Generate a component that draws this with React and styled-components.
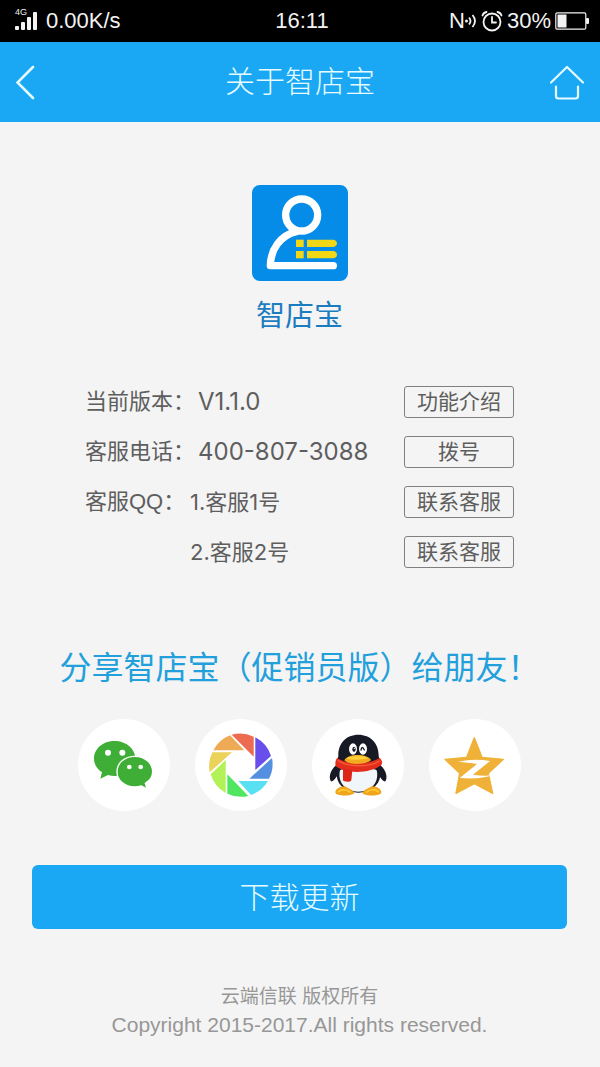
import React from "react";
import styled, { createGlobalStyle } from "styled-components";

const GlobalStyle = createGlobalStyle`
  * {
    box-sizing: border-box;
  }
  body {
    margin: 0;
    background: #f4f4f4;
    font-family: "Liberation Sans", "Noto Sans CJK SC", sans-serif;
  }
  button {
    font-family: inherit;
    cursor: pointer;
  }
`;

const Page = styled.div`
  min-height: 100vh;
  background: #f4f4f4;
`;

const StatusBar = styled.div`
  display: grid;
  grid-template-columns: 1fr auto 1fr;
  align-items: center;
  height: 42px;
  padding: 0 11px 0 15px;
  background: #000;
  color: #f2f2f2;
  font-size: 22px;
  line-height: 42px;
`;

const StatusGroup = styled.div`
  display: flex;
  align-items: center;
  justify-content: ${(props) => (props.$end ? "flex-end" : "flex-start")};
  gap: ${(props) => (props.$end ? "4px" : "9px")};
  white-space: nowrap;
  svg {
    display: block;
    flex: none;
  }
`;

const Signal = styled.span`
  position: relative;
  display: block;
`;

const Network = styled.span`
  position: absolute;
  top: -3px;
  left: 0;
  font-size: 9px;
  line-height: 9px;
`;

const Nfc = styled.span`
  display: flex;
  align-items: center;
`;

const Header = styled.header`
  display: grid;
  grid-template-columns: 1fr auto 1fr;
  align-items: center;
  height: 80px;
  padding: 0 16px;
  background: #1aa8f4;
  color: #e6fbff;
`;

const Title = styled.h1`
  margin: 0;
  font-size: 30px;
  font-weight: 300;
  line-height: 42px;
`;

const IconButton = styled.button`
  display: block;
  justify-self: ${(props) => (props.$end ? "end" : "start")};
  padding: 0;
  border: none;
  background: none;
  color: inherit;
  svg {
    display: block;
  }
`;

const Main = styled.main`
  display: flex;
  flex-direction: column;
  align-items: center;
  padding: 63px 33px 24px 32px;
`;

const AppName = styled.h2`
  margin: 14px 0 48px;
  color: #1c7cc0;
  font-size: 29px;
  font-weight: 400;
  line-height: 43px;
`;

const InfoList = styled.ul`
  display: flex;
  flex-direction: column;
  gap: 18px;
  width: 100%;
  margin: 0;
  padding: 0 53px;
  list-style: none;
`;

const InfoRow = styled.li`
  display: flex;
  align-items: center;
  gap: 3px;
  height: 32px;
  color: #5e5e5e;
  font-size: 22px;
  line-height: 32px;
  white-space: nowrap;
`;

const Label = styled.span`
  min-width: 102px;
`;

const Value = styled.span`
  flex: 1;
  font-family: Inter, "Noto Sans CJK SC", sans-serif;
  font-size: ${(props) => (props.$numeric ? "24px" : "22px")};
`;

const SmallButton = styled.button`
  width: 110px;
  height: 32px;
  padding: 0;
  border: 1px solid #808080;
  border-radius: 3px;
  background: transparent;
  color: #5e5e5e;
  font-size: 21px;
  line-height: 30px;
`;

const ShareTitle = styled.h2`
  margin: 76px 0 27px;
  color: #22a0dc;
  font-size: 32px;
  font-weight: 400;
  line-height: 48px;
  white-space: nowrap;
`;

const ShareList = styled.div`
  display: flex;
  gap: 25px;
`;

const ShareButton = styled.button`
  width: 92px;
  height: 92px;
  padding: 0;
  border: none;
  border-radius: 50%;
  background: #fff;
  svg {
    display: block;
    width: 100%;
    height: 100%;
  }
`;

const UpdateButton = styled.button`
  width: 100%;
  height: 64px;
  margin: 54px 0;
  padding: 2px 0 0;
  border: none;
  border-radius: 6px;
  background: #1aa8f4;
  color: #e6fbff;
  font-size: 30px;
  font-weight: 300;
  line-height: 62px;
`;

const Footer = styled.footer`
  color: #979797;
  font-size: 21px;
  line-height: 28px;
  text-align: center;
  white-space: nowrap;
`;

const Company = styled.div`
  font-size: 19px;
`;

function SignalIcon() {
  return (
    <svg width="22" height="20" viewBox="0 0 22 20" fill="currentColor">
      <rect x="0" y="15" width="4" height="4" rx="1" />
      <rect x="6" y="11" width="4" height="8" rx="1" />
      <rect x="12" y="6" width="4" height="13" rx="1" />
      <rect x="18" y="1" width="4" height="18" rx="1" />
    </svg>
  );
}

function WavesIcon() {
  return (
    <svg width="12" height="16" viewBox="0 0 12 16" fill="none" stroke="currentColor" strokeWidth="1.8">
      <circle cx="1.500" cy="8" r="1.500" fill="currentColor" stroke="none" />
      <path d="M4 4.500q3 3.500 0 7M7.500 2q5 6 0 12" />
    </svg>
  );
}

function AlarmIcon() {
  return (
    <svg width="22" height="22" viewBox="0 0 22 22" fill="none" stroke="currentColor" strokeWidth="1.8" strokeLinecap="round">
      <circle cx="11" cy="12" r="8.500" />
      <path d="M11 7v5.500h4M1.500 5.500Q2.500 2.500 5.500 2M20.500 5.500Q19.500 2.500 16.500 2" />
    </svg>
  );
}

function BatteryIcon() {
  return (
    <svg width="34" height="18" viewBox="0 0 34 18">
      <rect x="0.8" y="0.8" width="30" height="16.4" rx="1.5" fill="none" stroke="currentColor" strokeWidth="1.2" />
      <rect x="2.500" y="2.500" width="9" height="13" fill="currentColor" />
      <rect x="31" y="6" width="3" height="6" rx="1" fill="currentColor" />
    </svg>
  );
}

function BackIcon() {
  return (
    <svg width="20" height="36" viewBox="0 0 20 36" fill="none" stroke="currentColor" strokeWidth="2.6" strokeLinecap="round">
      <path d="M17 3L1.500 18.500l15.500 15.500" />
    </svg>
  );
}

function HomeIcon() {
  return (
    <svg width="34" height="36" viewBox="0 0 34 36" fill="none" stroke="currentColor" strokeWidth="2.2" strokeLinecap="round" strokeLinejoin="round">
      <path d="M1 18.500L17 3l16 15.500M6 22.500v9.500q0 2.500 2.500 2.500h17q2.500 0 2.500-2.500v-9.500" />
    </svg>
  );
}

function AppLogo() {
  return (
    <svg width="96" height="96" viewBox="87 45 288 288">
      <rect x="87" y="45" width="288" height="288" rx="24" fill="#058ce8" />
      <g fill="none" stroke="#fff" strokeWidth="22" strokeLinecap="round" strokeLinejoin="round">
        <circle cx="236" cy="135" r="48" />
        <path d="M220 185C172 196 143 238 142 287H331" />
      </g>
      <g fill="#f2d716">
        <rect x="219" y="209" width="23" height="22" />
        <rect x="219" y="243" width="23" height="22" />
        <path d="M252 209h80q10 3 10 11t-10 11h-80zM252 243h80q10 3 10 11t-10 11h-80z" />
      </g>
    </svg>
  );
}

function WechatIcon() {
  return (
    <svg viewBox="27 27 276 276" fill="#3fae36">
      <path d="M137 93c-35 0-62 23-62 53 0 17 9 31 24 41l-5 19 23-11c7 2 13 3 20 3 35 0 62-23 62-52s-27-53-62-53z" />
      <path
        d="M197 139c-30 0-53 20-53 46s23 46 53 46c7 0 14-1 20-3l17 9-5-17c14-9 22-21 22-35 0-26-24-46-54-46z"
        stroke="#fff"
        strokeWidth="4"
      />
      <g fill="#fff">
        <circle cx="117" cy="128" r="9" />
        <circle cx="160" cy="128" r="9" />
        <circle cx="181" cy="171" r="7" />
        <circle cx="215" cy="171" r="7" />
      </g>
    </svg>
  );
}

const blades = [
  { color: "#eeaa55", d: "M82 121A96 96 0 0 1 132 76L175 121Z" },
  { color: "#ed6b50", d: "M137 74A96 96 0 0 1 203 80V140Z" },
  { color: "#684eea", d: "M208 82A96 96 0 0 1 255 138L208 180Z" },
  { color: "#5590e0", d: "M258 144A96 96 0 0 1 249 206H190Z" },
  { color: "#59e1f1", d: "M246 213A96 96 0 0 1 195 255L157 213Z" },
  { color: "#50e660", d: "M187 258A96 96 0 0 1 124 251V193Z" },
  { color: "#b3f159", d: "M119 249A96 96 0 0 1 74 193L119 150Z" },
  { color: "#ead25b", d: "M71 187A96 96 0 0 1 79 127H138Z" },
];

function MomentsIcon() {
  return (
    <svg viewBox="27 27 276 276">
      {blades.map((blade) => (
        <path key={blade.color} d={blade.d} fill={blade.color} />
      ))}
    </svg>
  );
}

function QQIcon() {
  return (
    <svg viewBox="27 27 276 276">
      <g fill="#171a24">
        <path d="M106 160C84 177 77 196 82 211c3 8 11 1 20-13zM226 160c21 17 28 36 23 51-3 8-11 1-20-13z" />
        <path d="M166 74c-37 0-61 27-60 64-4 20-8 36-5 60 4 31 31 50 65 50s61-19 66-50c3-24-1-40-5-60 1-37-24-64-61-64z" />
      </g>
      <path d="M111 181c-8 34 14 64 55 64s63-30 55-64c-20-12-90-12-110 0z" fill="#f1f6fa" />
      <path d="M126 229c-17 0-29 9-29 18 0 12 45 13 57 3-3-10-15-13-28-21zM206 229c17 0 29 9 29 18 0 12-45 13-57 3 3-10 15-13 28-21z" fill="#f0a51c" />
      <path d="M107 245c8-8 22-8 34 1M225 245c-8-8-22-8-34 1" fill="none" stroke="#ffcc32" strokeWidth="5" strokeLinecap="round" />
      <path d="M103 143c22 20 99 22 127 0 8 7 9 17 5 22-30 25-106 29-137 3-2-8-1-18 5-25z" fill="#e32d1d" />
      <path d="M120 174l28 7-3 29c0 7-21 7-25 1z" fill="#dc2418" />
      <path d="M104 151c28 21 98 22 126 1" fill="none" stroke="#f55a35" strokeWidth="4" />
      <path d="M124 151c5-11 22-16 40-16 19 0 34 5 40 15-13 14-65 17-80 1z" fill="#f3aa20" />
      <path d="M130 146c15-10 51-11 65-1-20 5-44 6-65 1z" fill="#ffd23c" />
      <ellipse cx="150" cy="117" rx="12" ry="17" fill="#fff" />
      <ellipse cx="180" cy="117" rx="12" ry="17" fill="#fff" />
      <ellipse cx="153" cy="118" rx="5" ry="8" fill="#171a24" />
      <circle cx="154" cy="115" r="2" fill="#fff" />
      <path d="M174 120q3-15 10 0" fill="none" stroke="#171a24" strokeWidth="4" strokeLinecap="round" />
    </svg>
  );
}

function QzoneIcon() {
  return (
    <svg viewBox="27 27 276 276">
      <path
        d="M163 83L186 142 250 148 205 190 218 250 163 221 108 250 119 190 75 148 140 142Z"
        fill="#efb137"
        stroke="#efb137"
        strokeWidth="4"
        strokeLinejoin="round"
      />
      <path d="M115 155Q162 145 210 153L159 194Q190 199 218 196 181 209 119 204L171 162Q142 157 115 155Z" fill="#fff" />
    </svg>
  );
}

const rows = [
  { label: "当前版本：", value: "V1.1.0", action: "功能介绍", numeric: true },
  { label: "客服电话：", value: "400-807-3088", action: "拨号", numeric: true },
  { label: "客服QQ：", value: "1.客服1号", action: "联系客服" },
  { label: "", value: "2.客服2号", action: "联系客服" },
];

const shares = [
  { name: "微信", Icon: WechatIcon },
  { name: "朋友圈", Icon: MomentsIcon },
  { name: "QQ", Icon: QQIcon },
  { name: "QQ空间", Icon: QzoneIcon },
];

export default function App() {
  return (
    <Page lang="zh-CN">
      <GlobalStyle />
      <StatusBar>
        <StatusGroup>
          <Signal>
            <Network>4G</Network>
            <SignalIcon />
          </Signal>
          <span>0.00K/s</span>
        </StatusGroup>
        <span>16:11</span>
        <StatusGroup $end>
          <Nfc>
            N
            <WavesIcon />
          </Nfc>
          <AlarmIcon />
          <span>30%</span>
          <BatteryIcon />
        </StatusGroup>
      </StatusBar>
      <Header>
        <IconButton aria-label="返回">
          <BackIcon />
        </IconButton>
        <Title>关于智店宝</Title>
        <IconButton $end aria-label="首页">
          <HomeIcon />
        </IconButton>
      </Header>
      <Main>
        <AppLogo />
        <AppName>智店宝</AppName>
        <InfoList>
          {rows.map((row) => (
            <InfoRow key={row.value}>
              <Label>{row.label}</Label>
              <Value $numeric={row.numeric}>{row.value}</Value>
              <SmallButton>{row.action}</SmallButton>
            </InfoRow>
          ))}
        </InfoList>
        <ShareTitle>分享智店宝（促销员版）给朋友！</ShareTitle>
        <ShareList>
          {shares.map(({ name, Icon }) => (
            <ShareButton key={name} aria-label={name}>
              <Icon />
            </ShareButton>
          ))}
        </ShareList>
        <UpdateButton>下载更新</UpdateButton>
        <Footer>
          <Company>云端信联 版权所有</Company>
          <div>Copyright 2015-2017.All rights reserved.</div>
        </Footer>
      </Main>
    </Page>
  );
}
